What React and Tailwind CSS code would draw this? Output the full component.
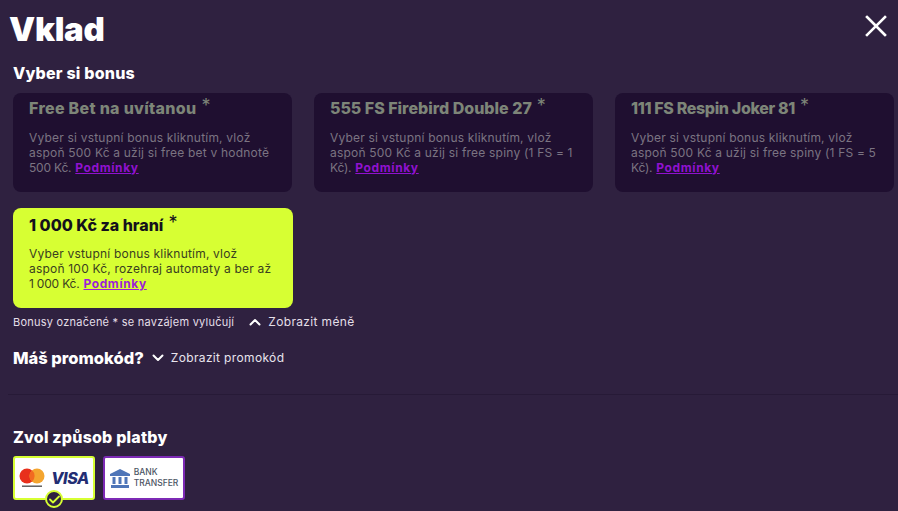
const font = { fontFamily: 'Inter, "Noto Sans", sans-serif' };

const BonusCard = ({ title, lines, active, titleClass }) => (
  <div
    className={`rounded-lg pl-4 pr-2 ${active ? 'h-[100px] bg-[#d7ff33] pt-[5px]' : 'h-[99px] bg-[#1f0f30] pt-[3px]'}`}
  >
    <div className={`flex h-[24px] items-center text-[16px] font-extrabold ${titleClass} ${active ? 'text-[#14101c]' : 'text-[#7d8578]'}`}>
      {title}
      <span className="relative -top-[3px] ml-[5px] text-[18px] font-normal">*</span>
    </div>
    <div className={`text-[12px] leading-[15px] tracking-[0.2px] ${active ? 'mt-[9px] text-[#3a4020]' : 'mt-[10px] text-[#7b7482]'}`}>
      {lines.map((line, i) =>
        i === lines.length - 1 ? (
          <div key={i} className="whitespace-nowrap">
            <span className="tracking-[-0.2px]">{line}</span>
            <span className={`ml-1 font-bold tracking-[0.6px] underline ${active ? 'text-[#9c1fd6]' : 'text-[#9012d0]'}`}>Podmínky</span>
          </div>
        ) : (
          <div key={i} className="whitespace-nowrap">{line}</div>
        )
      )}
    </div>
  </div>
);

const Chevron = ({ up }) => (
  <svg width="12" height="8" viewBox="0 0 12 8" fill="none" stroke="white" strokeWidth="2" strokeLinecap="round" strokeLinejoin="round">
    <path d={up ? 'M1.5 6.5 6 2l4.5 4.5' : 'M1.5 1.5 6 6l4.5-4.5'} />
  </svg>
);

const App = () => (
  <div className="h-[511px] w-[898px] overflow-hidden bg-[#2f2140]" style={font}>
    <div className="flex h-[60px] items-start justify-between pl-[9px] pr-[11px] pt-[9px]">
      <h1 className="text-[33px] leading-[40px] font-black tracking-[-0.3px] text-white">Vklad</h1>
      <svg className="mt-[6px]" width="22" height="22" viewBox="0 0 22 22" stroke="white" strokeWidth="2.6" strokeLinecap="square">
        <path d="M2 2l18 18M20 2 2 20" />
      </svg>
    </div>

    <div className="pl-[13px] pr-[5px]">
      <h2 className="text-[16px] leading-[26px] font-extrabold tracking-[0.2px] text-white">Vyber si bonus</h2>

      <div className="mt-[7px] grid grid-cols-[279px_279px_279px] gap-x-[22px]">
        <BonusCard titleClass="tracking-[0.3px]" title="Free Bet na uvítanou" lines={['Vyber si vstupní bonus kliknutím, vlož', 'aspoň 500 Kč a užij si free bet v hodnotě', '500 Kč.']} />
        <BonusCard titleClass="tracking-[0px]" title="555 FS Firebird Double 27" lines={['Vyber si vstupní bonus kliknutím, vlož', 'aspoň 500 Kč a užij si free spiny (1 FS = 1', 'Kč).']} />
        <BonusCard titleClass="tracking-[-0.35px]" title="111 FS Respin Joker 81" lines={['Vyber si vstupní bonus kliknutím, vlož', 'aspoň 500 Kč a užij si free spiny (1 FS = 5', 'Kč).']} />
      </div>

      <div className="mt-[16px] w-[280px]">
        <BonusCard active titleClass="tracking-[0px]" title="1 000 Kč za hraní" lines={['Vyber vstupní bonus kliknutím, vlož', 'aspoň 100 Kč, rozehraj automaty a ber až', '1 000 Kč.']} />
      </div>

      <div className="mt-[6px] flex h-[16px] items-center text-[11px] tracking-[0.24px] text-[#e4dfe8]">
        <span>Bonusy označené * se navzájem vylučují</span>
        <span className="ml-[15px]"><Chevron up /></span>
        <span className="ml-[7px] text-[12px] tracking-[0.35px]">Zobrazit méně</span>
      </div>

      <div className="mt-[16px] flex h-[24px] items-center">
        <span className="text-[16.5px] font-extrabold text-white">Máš promokód?</span>
        <span className="ml-[8px]"><Chevron /></span>
        <span className="ml-[7px] text-[12px] tracking-[0.35px] text-[#e9e5ee]">Zobrazit promokód</span>
      </div>
    </div>

    <div className="ml-[8px] mt-[24px] border-t border-[#271a37]" />

    <div className="pl-[13px]">
      <h2 className="mt-[32px] text-[16px] leading-[20px] font-extrabold tracking-[0.2px] text-white">Zvol způsob platby</h2>
      <div className="mt-[9px] flex gap-[8px]">
        <div className="relative flex h-[44px] w-[82px] items-center justify-center gap-[6px] rounded-[3px] border-2 border-[#d7ff33] bg-white">
          <svg width="26" height="20" viewBox="0 0 26 20">
            <circle cx="8" cy="8" r="7.5" fill="#e8301c" />
            <circle cx="18" cy="8" r="7.5" fill="#f4a52f" />
            <path d="M13 2.3a7.5 7.5 0 0 1 0 11.4 7.5 7.5 0 0 1 0-11.4z" fill="#f26a21" />
            <rect x="3" y="17.5" width="20" height="1.4" fill="#555" />
          </svg>
          <span className="text-[16px] leading-none font-extrabold tracking-[-0.5px] text-[#232e73] italic">VISA</span>
          <div className="absolute -bottom-[10px] left-[30px] flex h-[18px] w-[18px] items-center justify-center rounded-full border-2 border-[#d7ff33] bg-[#2f2140]">
            <svg width="11" height="9" viewBox="0 0 11 9" fill="none" stroke="#d7ff33" strokeWidth="1.8" strokeLinecap="round" strokeLinejoin="round">
              <path d="M1 4.5 4 7.5 10 1.5" />
            </svg>
          </div>
        </div>
        <div className="flex h-[44px] w-[82px] items-center justify-center gap-[4px] rounded-[3px] border-2 border-[#7d2ab5] bg-white">
          <svg width="20" height="19" viewBox="0 0 20 19" fill="#4f76b8">
            <path d="M10 0 20 5v2H0V5z" />
            <rect x="2.5" y="8" width="3" height="7" />
            <rect x="8.5" y="8" width="3" height="7" />
            <rect x="14.5" y="8" width="3" height="7" />
            <rect x="1" y="16" width="18" height="3" />
          </svg>
          <div className="text-[8.5px] leading-[11px] font-medium text-[#4d5564]">
            <div>BANK</div>
            <div>TRANSFER</div>
          </div>
        </div>
      </div>
    </div>
  </div>
);

export default App;
